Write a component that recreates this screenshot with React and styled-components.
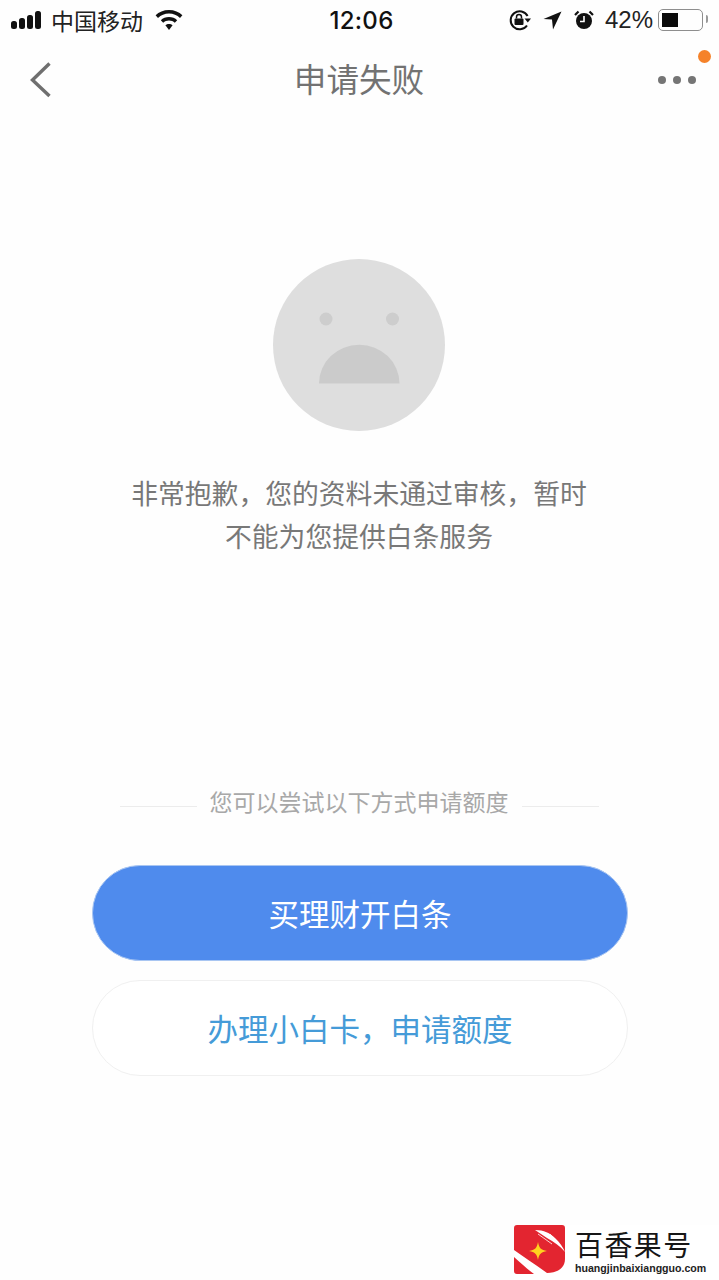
import React from "react";
import styled, { createGlobalStyle } from "styled-components";

const GlobalStyle = createGlobalStyle`
  html, body {
    margin: 0;
    padding: 0;
    background: #fff;
  }
  body {
    font-family: "Noto Sans CJK SC", "Noto Sans", sans-serif;
  }
`;

const Page = styled.div`
  position: relative;
  width: 719px;
  height: 1280px;
  overflow: hidden;
  background: #fefefe;
`;

const StatusBar = styled.div`
  display: flex;
  align-items: center;
  justify-content: space-between;
  height: 40px;
  padding: 0 16px 0 11px;
  color: #111;
  box-sizing: border-box;
`;

const StatusSide = styled.div`
  display: flex;
  align-items: center;
  gap: ${(p) => p.$gap}px;
  width: ${(p) => p.$width}px;
  justify-content: ${(p) => (p.$end ? "flex-end" : "flex-start")};
`;

const Carrier = styled.span`
  font-size: 23px;
  line-height: 40px;
  color: #222;
  margin-right: 5px;
`;

const Clock = styled.span`
  font-family: "Inter", "Liberation Sans", sans-serif;
  font-size: 24px;
  font-weight: 500;
  letter-spacing: 0.3px;
  line-height: 40px;
  color: #111;
  padding-top: 2px;
`;

const Percent = styled.span`
  font-family: "Liberation Sans", sans-serif;
  font-size: 24px;
  line-height: 40px;
  color: #222;
  margin-left: -1px;
  margin-right: -7px;
`;

const Battery = styled.span`
  position: relative;
  display: flex;
  align-items: center;
  box-sizing: border-box;
  width: 45px;
  height: 22px;
  padding: 3px;
  border: 1.5px solid #8e8e8e;
  border-radius: 5px;
  &::after {
    content: "";
    position: absolute;
    right: -6px;
    top: 5px;
    width: 2px;
    height: 8px;
    background: #999;
    border-radius: 0 2px 2px 0;
  }
`;

const BatteryFill = styled.span`
  display: block;
  height: 100%;
  background: #0a0a0a;
`;

const NavBar = styled.div`
  display: flex;
  align-items: center;
  justify-content: space-between;
  height: 80px;
  padding: 0 23px 0 30px;
`;

const Title = styled.h1`
  margin: 0 0 4px 8px;
  font-size: 32.6px;
  font-weight: 400;
  line-height: 76px;
  color: #727272;
`;

const MoreButton = styled.div`
  display: flex;
  gap: 7px;
  width: 38px;
`;

const MoreDot = styled.span`
  width: 8px;
  height: 8px;
  border-radius: 50%;
  background: #757575;
`;

const Badge = styled.span`
  position: absolute;
  left: 698px;
  top: 50px;
  width: 13px;
  height: 13px;
  border-radius: 50%;
  background: #f5822a;
`;

const Main = styled.div`
  display: flex;
  flex-direction: column;
  align-items: center;
  padding: 139px 1px 0 0;
`;

const Message = styled.p`
  margin: 40px 0 0;
  font-size: 26.8px;
  line-height: 43px;
  text-align: center;
  color: #787878;
`;

const DividerRow = styled.div`
  display: flex;
  align-items: center;
  justify-content: center;
  gap: 13px;
  margin-top: 227px;
  width: 479px;
`;

const DividerLine = styled.span`
  flex: 1;
  height: 1px;
  margin-top: 10px;
  background: #ececec;
`;

const DividerText = styled.span`
  font-size: 23px;
  line-height: 34px;
  color: #a8a8a8;
  white-space: nowrap;
`;

const Button = styled.div`
  display: flex;
  align-items: center;
  justify-content: center;
  box-sizing: border-box;
  width: 536px;
  height: 96px;
  border-radius: 48px;
  font-size: 30.5px;
  background: ${(p) => (p.$primary ? "#4f8bed" : "#fff")};
  color: ${(p) => (p.$primary ? "#fff" : "#459bd8")};
  border: 1px solid ${(p) => (p.$primary ? "#a9c6f2" : "#f0f0f0")};
  margin: ${(p) => p.$top}px 0 0 2px;
`;

const Watermark = styled.div`
  position: absolute;
  left: 514px;
  top: 1225px;
  width: 205px;
  height: 55px;
  display: flex;
  gap: 10px;
  background: #fff;
`;

const WatermarkText = styled.div`
  display: flex;
  flex-direction: column;
  align-items: flex-start;
`;

const WatermarkName = styled.span`
  font-size: 28px;
  line-height: 36px;
  letter-spacing: 1.4px;
  color: #161616;
  margin-top: 1px;
  white-space: nowrap;
`;

const WatermarkUrl = styled.span`
  font-family: "Liberation Sans", sans-serif;
  font-size: 10.6px;
  font-weight: 700;
  line-height: 14px;
  color: #222;
  margin-top: -1px;
  white-space: nowrap;
`;

const BackIcon = () => (
  <svg width="22" height="38" viewBox="0 0 22 38" fill="none">
    <path d="M19.500 2.500L2.500 19L19.500 35" stroke="#6f6f6f" strokeWidth="3.400" />
  </svg>
);

const SignalIcon = () => (
  <svg width="33" height="19" viewBox="0 0 33 19" fill="#111">
    <rect x="0" y="10" width="6" height="8" rx="2.500" />
    <rect x="8" y="7" width="6" height="11" rx="2.500" />
    <rect x="16" y="4" width="6" height="14" rx="2.500" />
    <rect x="24" y="0" width="6" height="18" rx="2.500" />
  </svg>
);

const WifiIcon = () => (
  <svg width="28" height="21" viewBox="0 0 28 21" fill="#111">
    <path d="M14 0C8.600 0 3.900 2 0.600 5.300L3 8C5.900 5.200 9.800 3.600 14 3.600S22.100 5.200 25 8L27.400 5.300C24.100 2 19.400 0 14 0Z" />
    <path d="M14 7C10.800 7 7.900 8.200 5.800 10.200L8.200 12.800C9.700 11.400 11.800 10.600 14 10.600S18.300 11.400 19.800 12.800L22.200 10.200C20.100 8.200 17.200 7 14 7Z" />
    <path d="M14 14C12.700 14 11.400 14.500 10.400 15.300L14 20L17.600 15.300C16.600 14.500 15.300 14 14 14Z" />
  </svg>
);

const RotationLockIcon = () => (
  <svg width="22" height="22" viewBox="0 0 22 22">
    <path d="M18 16.500A9 9 0 1 1 18.600 7" fill="none" stroke="#111" strokeWidth="2" />
    <path d="M15.500 9.500H22L18.800 13.500Z" fill="#111" />
    <rect x="5.500" y="9.500" width="9" height="6.500" rx="1" fill="#111" />
    <path d="M7.500 9.500V8A2.500 2.500 0 0 1 12.500 8V9.500" fill="none" stroke="#111" strokeWidth="1.500" />
  </svg>
);

const LocationIcon = () => (
  <svg width="19" height="19" viewBox="0 0 19 19" fill="#111">
    <path d="M18.500 0.500L0.500 8L9 8.500L10 18.500Z" />
  </svg>
);

const AlarmIcon = () => (
  <svg width="20" height="20" viewBox="0 0 20 20">
    <circle cx="10" cy="11" r="8" fill="#111" />
    <path d="M10 6V11.500H6" fill="none" stroke="#fff" strokeWidth="1.600" />
    <path d="M1 5L4.500 1.500M19 5L15.500 1.500" stroke="#111" strokeWidth="2.200" />
  </svg>
);

const SadFace = () => (
  <svg width="172" height="172" viewBox="0 0 172 172">
    <circle cx="86" cy="86" r="86" fill="#dedede" />
    <circle cx="53" cy="60" r="6.500" fill="#cdcdcd" />
    <circle cx="119.500" cy="60" r="6.500" fill="#cdcdcd" />
    <path d="M46 124.500A40 38.500 0 0 1 126.500 124.500Z" fill="#cbcbcb" />
  </svg>
);

const WatermarkLogo = () => (
  <svg width="51" height="50" viewBox="0 0 51 50">
    <path d="M3 0H48a3 3 0 0 1 3 3V34C51 44 42 48 33 48C22 40 10 32 0 25V3a3 3 0 0 1 3-3Z" fill="#e32530" />
    <path d="M0 32C7 38 13 44 20 49H3a3 3 0 0 1-3-3Z" fill="#e32530" />
    <path d="M21 5C30 5 36 8 41 13C46 18 49 22 51 27C46 21 40 17 33 13C29 10 25 8 21 5Z" fill="#fff" />
    <path d="M24 9L38 19M36 9L48 23" stroke="#fff" strokeWidth="0.800" />
    <path d="M24 17C25 23 27 25 33 26C27 27 25 29 24 35C23 29 21 27 15 26C21 25 23 23 24 17Z" fill="#ffd21f" />
  </svg>
);

const App = () => {
  return (
    <>
      <GlobalStyle />
      <Page>
        <StatusBar>
          <StatusSide $width={249} $gap={7}>
            <SignalIcon />
            <Carrier>中国移动</Carrier>
            <WifiIcon />
          </StatusSide>
          <Clock>12:06</Clock>
          <StatusSide $width={240} $gap={12} $end>
            <RotationLockIcon />
            <LocationIcon />
            <AlarmIcon />
            <Percent>42%</Percent>
            <Battery>
              <BatteryFill style={{ width: "42%" }} />
            </Battery>
          </StatusSide>
        </StatusBar>
        <NavBar>
          <BackIcon />
          <Title>申请失败</Title>
          <MoreButton>
            <MoreDot />
            <MoreDot />
            <MoreDot />
          </MoreButton>
        </NavBar>
        <Badge />
        <Main>
          <SadFace />
          <Message>
            非常抱歉，您的资料未通过审核，暂时
            <br />
            不能为您提供白条服务
          </Message>
          <DividerRow>
            <DividerLine />
            <DividerText>您可以尝试以下方式申请额度</DividerText>
            <DividerLine />
          </DividerRow>
          <Button $primary $top={47}>买理财开白条</Button>
          <Button $top={19}>办理小白卡，申请额度</Button>
        </Main>
        <Watermark>
          <WatermarkLogo />
          <WatermarkText>
            <WatermarkName>百香果号</WatermarkName>
            <WatermarkUrl>huangjinbaixiangguo.com</WatermarkUrl>
          </WatermarkText>
        </Watermark>
      </Page>
    </>
  );
};

export default App;
